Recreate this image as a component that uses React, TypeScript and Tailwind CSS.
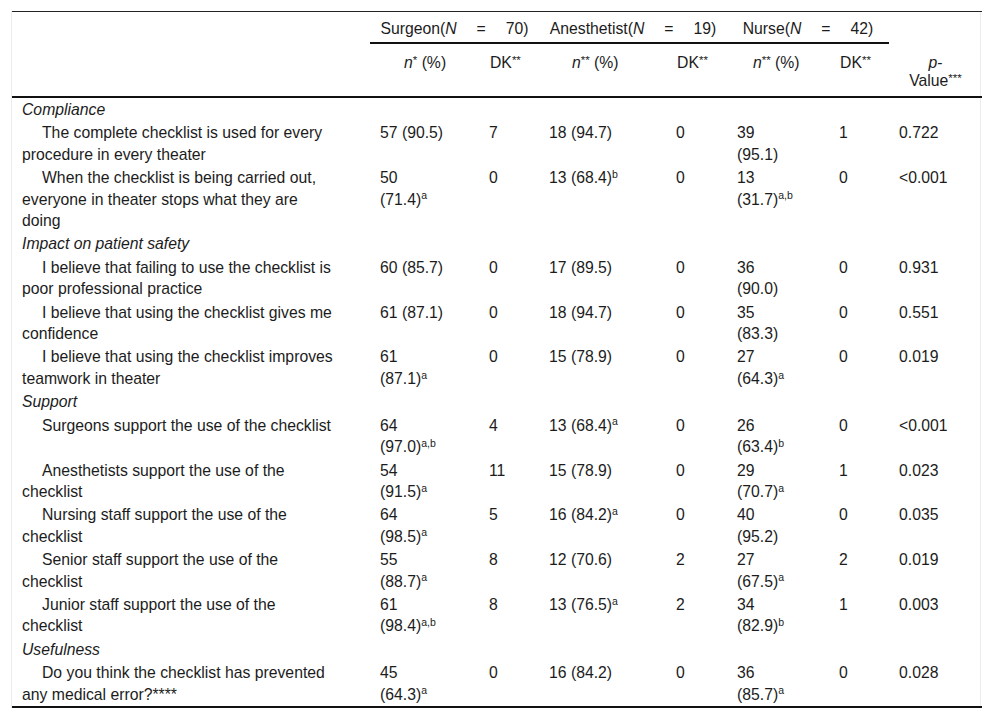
import React from "react";

// rows: label lines split by "|", data cells use "|" for a break and "^" for a superscript
type Row = { section: string } | { label: string; cells: string[] };

const rows: Row[] = [
  { section: "Compliance" },
  {
    label: "The complete checklist is used for every|procedure in every theater",
    cells: ["57 (90.5)", "7", "18 (94.7)", "0", "39|(95.1)", "1", "0.722"],
  },
  {
    label: "When the checklist is being carried out,|everyone in theater stops what they are|doing",
    cells: ["50|(71.4)^a", "0", "13 (68.4)^b", "0", "13|(31.7)^a,b", "0", "<0.001"],
  },
  { section: "Impact on patient safety" },
  {
    label: "I believe that failing to use the checklist is|poor professional practice",
    cells: ["60 (85.7)", "0", "17 (89.5)", "0", "36|(90.0)", "0", "0.931"],
  },
  {
    label: "I believe that using the checklist gives me|confidence",
    cells: ["61 (87.1)", "0", "18 (94.7)", "0", "35|(83.3)", "0", "0.551"],
  },
  {
    label: "I believe that using the checklist improves|teamwork in theater",
    cells: ["61|(87.1)^a", "0", "15 (78.9)", "0", "27|(64.3)^a", "0", "0.019"],
  },
  { section: "Support" },
  {
    label: "Surgeons support the use of the checklist",
    cells: ["64|(97.0)^a,b", "4", "13 (68.4)^a", "0", "26|(63.4)^b", "0", "<0.001"],
  },
  {
    label: "Anesthetists support the use of the|checklist",
    cells: ["54|(91.5)^a", "11", "15 (78.9)", "0", "29|(70.7)^a", "1", "0.023"],
  },
  {
    label: "Nursing staff support the use of the|checklist",
    cells: ["64|(98.5)^a", "5", "16 (84.2)^a", "0", "40|(95.2)", "0", "0.035"],
  },
  {
    label: "Senior staff support the use of the|checklist",
    cells: ["55|(88.7)^a", "8", "12 (70.6)", "2", "27|(67.5)^a", "2", "0.019"],
  },
  {
    label: "Junior staff support the use of the|checklist",
    cells: ["61|(98.4)^a,b", "8", "13 (76.5)^a", "2", "34|(82.9)^b", "1", "0.003"],
  },
  { section: "Usefulness" },
  {
    label: "Do you think the checklist has prevented|any medical error?****",
    cells: ["45|(64.3)^a", "0", "16 (84.2)", "0", "36|(85.7)^a", "0", "0.028"],
  },
];

const Sup = ({ children, className = "text-[10.5px]" }: { children: React.ReactNode; className?: string }) => (
  <sup className={`${className} not-italic`}>{children}</sup>
);

const Star = ({ children }: { children: React.ReactNode }) => (
  <Sup className="text-[11.5px] top-[-0.35em]">{children}</Sup>
);

const renderCell = (value: string) =>
  value.split("|").map((line, i) => {
    const [text, sup] = line.split("^");
    return (
      <div key={i} className="whitespace-nowrap">
        {text}
        {sup && <Sup>{sup}</Sup>}
      </div>
    );
  });

const Group = ({ name, n }: { name: string; n: number }) => (
  <span className="whitespace-nowrap">
    {name}(<i>N</i>
    <span className="ml-[20px] mr-[20px]">=</span>
    {n})
  </span>
);

const th = "font-normal align-top whitespace-nowrap";
const grp = `${th} px-[10px] text-center pt-[8px] pb-[4px] border-b-2 border-[#111]`;
const sub = `${th} pt-[10px] pb-[6px] border-b-2 border-[#111]`;
const td = "pl-[10px] pr-[6px] py-px align-top text-left";

const App = () => {
  return (
    <div className="min-h-[719px] bg-white pt-[11px] px-[11px] text-[#1c1c1c] text-[15.75px] leading-[21.4px] font-['Liberation_Sans',Arial,sans-serif]">
      <div className="w-[970px] border-x border-[#ececec]">
        <table className="w-[970px] table-fixed border-separate border-spacing-0 border-t border-[#222]">
          <colgroup>
            <col className="w-[358px]" />
            <col className="w-[109px]" />
            <col className="w-[60px]" />
            <col className="w-[127px]" />
            <col className="w-[61px]" />
            <col className="w-[102px]" />
            <col className="w-[60px]" />
            <col className="w-[93px]" />
          </colgroup>
          <thead className="leading-[18px]">
            <tr>
              <th className={`${th} pt-[8px] pb-[4px]`} />
              <th colSpan={2} className={grp}>
                <Group name="Surgeon" n={70} />
              </th>
              <th colSpan={2} className={grp}>
                <Group name="Anesthetist" n={19} />
              </th>
              <th colSpan={2} className={grp}>
                <Group name="Nurse" n={42} />
              </th>
              <th className={`${th} pt-[8px] pb-[4px]`} />
            </tr>
            <tr>
              <th className={sub} />
              <th className={`${sub} text-left pl-[34px]`}>
                <i>n</i><Star>*</Star> (%)
              </th>
              <th className={`${sub} text-left pl-[11px]`}>
                DK<Star>**</Star>
              </th>
              <th className={`${sub} text-left pl-[33px]`}>
                <i>n</i><Star>**</Star> (%)
              </th>
              <th className={`${sub} text-left pl-[11px]`}>
                DK<Star>**</Star>
              </th>
              <th className={`${sub} text-left pl-[26px]`}>
                <i>n</i><Star>**</Star> (%)
              </th>
              <th className={`${sub} text-left pl-[11px]`}>
                DK<Star>**</Star>
              </th>
              <th className={`${sub} px-[8px] text-center`}>
                <div>
                  <i>p</i>-
                </div>
                <div>
                  Value<Star>***</Star>
                </div>
              </th>
            </tr>
          </thead>
          <tbody>
            {rows.map((row, idx) => {
              const last = idx === rows.length - 1;
              const bottom = last ? "border-b-2 border-[#111]" : "";
              if ("section" in row) {
                return (
                  <tr key={idx}>
                    <td colSpan={8} className={`${td} italic ${bottom}`}>
                      {row.section}
                    </td>
                  </tr>
                );
              }
              return (
                <tr key={idx}>
                  <td className={`${td} ${bottom}`}>
                    {row.label.split("|").map((line, i) => (
                      <div key={i} className={i === 0 ? "pl-[20px] whitespace-nowrap" : "whitespace-nowrap"}>
                        {line}
                      </div>
                    ))}
                  </td>
                  {row.cells.map((c, i) => (
                    <td key={i} className={`${td} ${bottom}`}>
                      {renderCell(c)}
                    </td>
                  ))}
                </tr>
              );
            })}
          </tbody>
        </table>
      </div>
    </div>
  );
};

export default App;
